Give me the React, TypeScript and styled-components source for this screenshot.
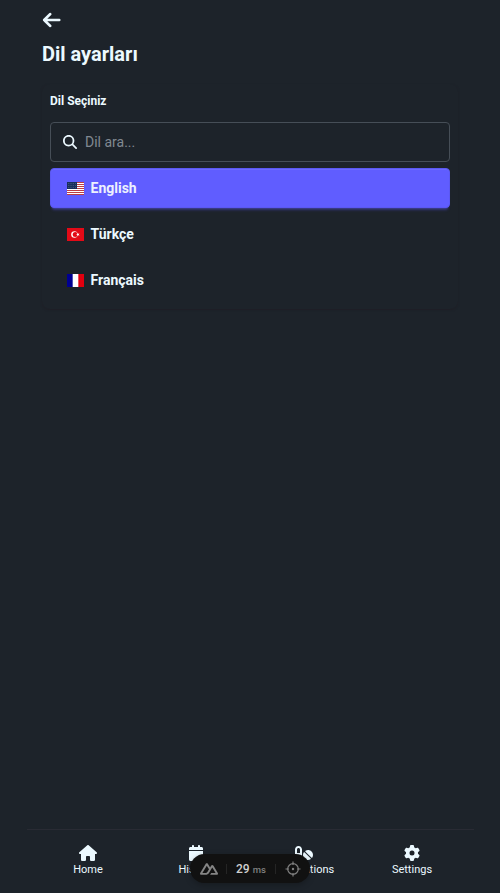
import React from "react";
import styled, { createGlobalStyle } from "styled-components";
import { FaMagnifyingGlass, FaHouse, FaCalendar, FaPills, FaGear } from "react-icons/fa6";

const GlobalStyle = createGlobalStyle`
  * { box-sizing: border-box; }
  body {
    margin: 0;
    background: #1d232a;
    color: #ecf9ff;
    font-family: Roboto, "Liberation Sans", sans-serif;
    overflow: hidden;
  }
`;

const Page = styled.div`
  width: 448px;
  height: 100vh;
  margin: 0 auto;
  display: flex;
  flex-direction: column;
`;

const Content = styled.main`
  flex: 1;
  padding: 0 16px;
  display: flex;
  flex-direction: column;
`;

const BackButton = styled.button`
  display: flex;
  align-items: center;
  width: 20px;
  height: 40px;
  padding: 0;
  border: 0;
  background: none;
  color: inherit;
`;

const Title = styled.h1`
  margin: 0;
  font-size: 20px;
  line-height: 28px;
  font-weight: 700;
`;

const Card = styled.section`
  margin-top: 16px;
  height: 225px;
  padding: 8px;
  border-radius: 8px;
  box-shadow: 0 1px 2px rgba(31, 28, 36, 0.7);
`;

const FieldLabel = styled.div`
  height: 30px;
  padding-top: 1px;
  font-size: 12px;
  line-height: 16px;
  font-weight: 700;
`;

const SearchField = styled.label`
  display: flex;
  align-items: center;
  gap: 8px;
  height: 40px;
  padding: 0 12px;
  border: 1px solid #464e57;
  border-radius: 4px;
`;

const SearchInput = styled.input`
  flex: 1;
  min-width: 0;
  padding: 0;
  border: 0;
  outline: 0;
  background: transparent;
  color: inherit;
  font: 400 14px/20px Roboto, "Liberation Sans", sans-serif;
  &::placeholder { color: #818991; opacity: 1; }
`;

const LanguageList = styled.div`
  display: flex;
  flex-direction: column;
  gap: 6px;
  margin-top: 6px;
`;

const LanguageButton = styled.button<{ $active?: boolean }>`
  display: flex;
  align-items: center;
  gap: 6.5px;
  height: 40px;
  padding: 0 16px;
  border: 1px solid ${(p) => (p.$active ? "#5b58f2" : "transparent")};
  border-radius: 4px;
  background: ${(p) => (p.$active ? "#605dff" : "transparent")};
  color: ${(p) => (p.$active ? "#edf1fe" : "#ecf9ff")};
  box-shadow: ${(p) =>
    p.$active
      ? "inset 0 1px 0 rgba(255, 255, 255, 0.08), 0 3px 2px -2px rgba(96, 93, 255, 0.3), 0 4px 3px -2px rgba(96, 93, 255, 0.3)"
      : "none"};
  font: 700 14px/20px Roboto, "Liberation Sans", sans-serif;
`;

const Flag = styled.svg`
  width: 17px;
  height: 13px;
  flex: none;
`;

const BottomNav = styled.nav`
  position: relative;
  display: grid;
  grid-template-columns: repeat(4, 1fr);
  height: 64px;
  padding: 15px 8px 0;

  &::before {
    content: "";
    position: absolute;
    inset: 0 0 auto 1px;
    height: 1px;
    background: #292b34;
  }
`;

const NavItem = styled.a<{ $iconWidth: number }>`
  display: flex;
  flex-direction: column;
  align-items: center;
  font-size: 11px;
  line-height: 18px;

  svg {
    width: ${(p) => p.$iconWidth}px;
    height: 16px;
    margin-top: 1px;
  }
`;

const DevDock = styled.div`
  position: absolute;
  left: 164px;
  top: 25px;
  width: 120px;
  height: 29px;
  display: flex;
  align-items: center;
  border-radius: 15px;
  background: #111111;
  color: #d0d0d0;
  font-size: 12px;
  font-weight: 500;
  box-shadow: 0 2px 6px rgba(0, 0, 0, 0.25);
`;

const DockLogo = styled.svg`
  width: 18px;
  height: 12px;
  margin-left: 10px;
`;

const DockDivider = styled.span<{ $gap: number }>`
  width: 1px;
  height: 10px;
  margin-left: ${(p) => p.$gap}px;
  background: #252525;
`;

const DockTime = styled.span`
  width: 30px;
  margin-left: 9px;
  white-space: nowrap;
`;

const Unit = styled.small`
  margin-left: 3px;
  color: #808080;
  font-size: 9.5px;
  font-weight: 500;
`;

const DockTarget = styled.svg`
  width: 16px;
  height: 16px;
  margin-left: 9px;
`;

const stripes = [0, 2, 4, 6, 8, 10, 12];
const starRows = [1, 3, 5];

const UsFlag = () => (
  <Flag viewBox="0 0 17 13">
    <rect width="17" height="13" fill="#fff" />
    {stripes.map((y) => (
      <rect key={y} y={y} width="17" height="1" fill="#bd3d44" />
    ))}
    <rect width="10" height="7" fill="#192f5d" />
    {starRows.map((y) => (
      <path key={y} d={`M1 ${y}.5H10`} stroke="#8290a8" strokeWidth=".6" strokeDasharray=".6 1.2" />
    ))}
  </Flag>
);

const TrFlag = () => (
  <Flag viewBox="0 0 17 13">
    <rect width="17" height="13" fill="#e30a17" />
    <circle cx="7.4" cy="6.5" r="3.2" fill="#fff" />
    <circle cx="8.2" cy="6.5" r="2.5" fill="#e30a17" />
    <path d="m9.1 6.5 1.2-.5.2-1.2.8 1 1.2-.3-.7 1 .7 1-1.2-.3-.8 1-.2-1.2z" fill="#fff" />
  </Flag>
);

const FrFlag = () => (
  <Flag viewBox="0 0 17 13">
    <rect width="17" height="13" fill="#fff" />
    <rect width="5.67" height="13" fill="#000091" />
    <rect x="11.33" width="5.67" height="13" fill="#e1000f" />
  </Flag>
);

const BackArrow = () => (
  <svg width="20" height="20" viewBox="0 0 20 20" fill="none" stroke="currentColor" strokeWidth="2.5" strokeLinecap="round" strokeLinejoin="round">
    <path d="M8.3 4 2.1 10l6.2 6M2.1 10h15.2" />
  </svg>
);

export default function App() {
  return (
    <>
      <GlobalStyle />
      <Page>
        <Content>
          <BackButton aria-label="Back">
            <BackArrow />
          </BackButton>
          <Title>Dil ayarları</Title>
          <Card>
            <FieldLabel>Dil Seçiniz</FieldLabel>
            <SearchField>
              <FaMagnifyingGlass size={14} />
              <SearchInput placeholder="Dil ara..." />
            </SearchField>
            <LanguageList>
              <LanguageButton $active>
                <UsFlag />
                English
              </LanguageButton>
              <LanguageButton>
                <TrFlag />
                Türkçe
              </LanguageButton>
              <LanguageButton>
                <FrFlag />
                Français
              </LanguageButton>
            </LanguageList>
          </Card>
        </Content>
        <BottomNav>
          <NavItem $iconWidth={18}>
            <FaHouse />
            Home
          </NavItem>
          <NavItem $iconWidth={14}>
            <FaCalendar />
            History
          </NavItem>
          <NavItem $iconWidth={18}>
            <FaPills />
            Medications
          </NavItem>
          <NavItem $iconWidth={16}>
            <FaGear />
            Settings
          </NavItem>
          <DevDock>
            <DockLogo viewBox="0 4 24 16" fill="#858585">
              <path d="M13.4642 19.8295h8.9218c.2834 0 .5618-.0723.8072-.2098a1.5899 1.5899 0 0 0 .5908-.5732 1.5293 1.5293 0 0 0 .216-.783 1.529 1.529 0 0 0-.2167-.7828L17.7916 7.4142a1.5904 1.5904 0 0 0-.5907-.573 1.6524 1.6524 0 0 0-.807-.2099c-.2833 0-.5616.0724-.807.2098a1.5904 1.5904 0 0 0-.5907.5731L13.4642 9.99l-2.9954-5.0366a1.5913 1.5913 0 0 0-.591-.573 1.6533 1.6533 0 0 0-.8071-.2098c-.2834 0-.5617.0723-.8072.2097a1.5913 1.5913 0 0 0-.591.573L.2168 17.4808A1.5292 1.5292 0 0 0 0 18.2635c-.0001.2749.0744.545.216.783a1.59 1.59 0 0 0 .5908.5732c.2454.1375.5238.2098.8072.2098h5.6003c2.219 0 3.8554-.9454 4.9813-2.7899l2.7337-4.5922L16.3935 9.99l4.3944 7.382h-5.8586l-1.4651 2.4575Zm-6.341-2.4601-3.9083-.0009 5.8586-9.8419 2.9232 4.921-1.9572 3.2892c-.7478 1.1967-1.5972 1.6326-2.9163 1.6326z" />
            </DockLogo>
            <DockDivider $gap={8} />
            <DockTime>
              29<Unit>ms</Unit>
            </DockTime>
            <DockDivider $gap={9} />
            <DockTarget viewBox="0 0 16 16" fill="none" stroke="#808080" strokeWidth="1.2">
              <circle cx="8" cy="8" r="5.3" />
              <path d="M8 .5V4M8 12v3.5M.5 8H4M12 8h3.5" />
              <circle cx="8" cy="8" r=".6" fill="#808080" />
            </DockTarget>
          </DevDock>
        </BottomNav>
      </Page>
    </>
  );
}
